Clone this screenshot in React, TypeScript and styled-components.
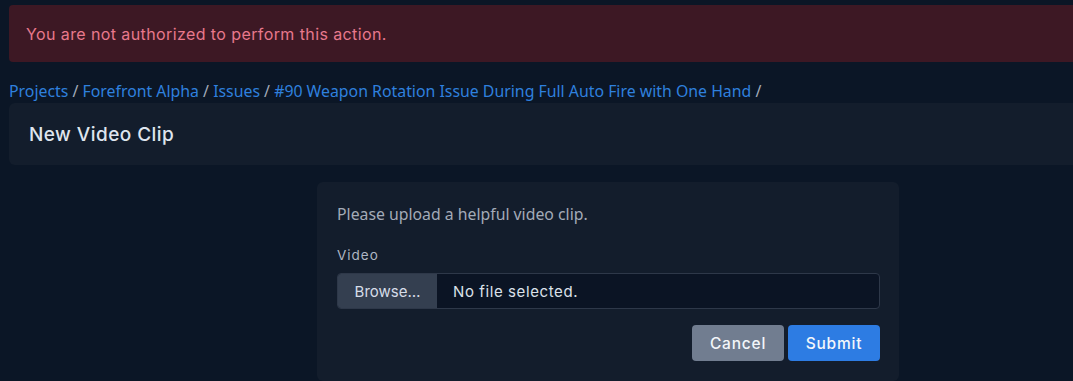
import React from "react";
import styled, { createGlobalStyle } from "styled-components";

const Global = createGlobalStyle`
  html, body { margin: 0; padding: 0; background: #0b1626; overflow: hidden; }
  body { font-family: "Noto Sans", sans-serif; }
  * { box-sizing: border-box; }
`;

const Page = styled.div`
  width: 1216px;
  padding: 5px 9px 0 9px;
  display: flex;
  flex-direction: column;
`;

const Alert = styled.div`
  background: #3d1824;
  color: #e8788c;
  border-radius: 4px;
  height: 57px;
  padding: 0 17px;
  display: flex;
  align-items: center;
  font-family: "Inter", sans-serif;
  font-size: 16px;
  letter-spacing: 0.4px;
`;

const Crumbs = styled.nav`
  margin-top: 17px;
  font-family: "Noto Sans", sans-serif;
  font-size: 15.85px;
  line-height: 24px;
  color: #a3acba;
  white-space: nowrap;
`;

const Crumb = styled.a`
  color: #2f80de;
  text-decoration: none;
`;

const Header = styled.div`
  background: #131d2c;
  border-radius: 6px;
  height: 62px;
  padding: 0 20px;
  display: flex;
  align-items: center;
`;

const Title = styled.h1`
  margin: 0;
  font-family: "Inter", sans-serif;
  font-weight: 500;
  font-size: 19px;
  letter-spacing: 0.45px;
  color: #dfe5ee;
`;

const FormCard = styled.div`
  align-self: center;
  width: 582px;
  margin-top: 17px;
  background: #131d2c;
  border-radius: 6px;
  padding: 20px 19px 20px 20px;
  display: flex;
  flex-direction: column;
`;

const Intro = styled.p`
  margin: 0;
  font-family: "Noto Sans", sans-serif;
  font-size: 15.8px;
  line-height: 24px;
  color: #a3abb8;
`;

const Label = styled.label`
  margin-top: 19px;
  font-family: "Inter", sans-serif;
  font-size: 13.5px;
  font-weight: 400;
  letter-spacing: 1px;
  line-height: 20px;
  color: #aeb6c3;
`;

const FileInput = styled.div`
  margin-top: 8px;
  height: 36px;
  display: flex;
  border: 1px solid #2e3849;
  border-radius: 4px;
  overflow: hidden;
  background: #0b1424;
  font-family: "Inter", sans-serif;
  font-size: 15px;
`;

const Browse = styled.span`
  width: 99px;
  background: #343f50;
  color: #d6dde8;
  display: flex;
  align-items: center;
  justify-content: center;
`;

const FileName = styled.span`
  padding-left: 16px;
  color: #dbe1ea;
  letter-spacing: 0.6px;
  display: flex;
  align-items: center;
`;

const Actions = styled.div`
  margin-top: 16px;
  display: flex;
  justify-content: flex-end;
  gap: 4px;
`;

const Button = styled.button<{ $variant: "secondary" | "primary" }>`
  height: 36px;
  width: 92px;
  border: none;
  border-radius: 4px;
  font-family: "Inter", sans-serif;
  font-size: 15.5px;
  font-weight: 500;
  letter-spacing: 0.8px;
  color: #f3f6fa;
  background: ${(p) => (p.$variant === "primary" ? "#2d7ce3" : "#717d90")};
  cursor: pointer;
`;

export default function App() {
  const crumbs = [
    "Projects",
    "Forefront Alpha",
    "Issues",
    "#90 Weapon Rotation Issue During Full Auto Fire with One Hand",
  ];
  return (
    <>
      <Global />
      <Page>
        <Alert>You are not authorized to perform this action.</Alert>
        <Crumbs>
          {crumbs.map((c) => (
            <React.Fragment key={c}>
              <Crumb href="#">{c}</Crumb> /{" "}
            </React.Fragment>
          ))}
        </Crumbs>
        <Header>
          <Title>New Video Clip</Title>
        </Header>
        <FormCard>
          <Intro>Please upload a helpful video clip.</Intro>
          <Label>Video</Label>
          <FileInput>
            <Browse>Browse…</Browse>
            <FileName>No file selected.</FileName>
          </FileInput>
          <Actions>
            <Button $variant="secondary">Cancel</Button>
            <Button $variant="primary">Submit</Button>
          </Actions>
        </FormCard>
      </Page>
    </>
  );
}
